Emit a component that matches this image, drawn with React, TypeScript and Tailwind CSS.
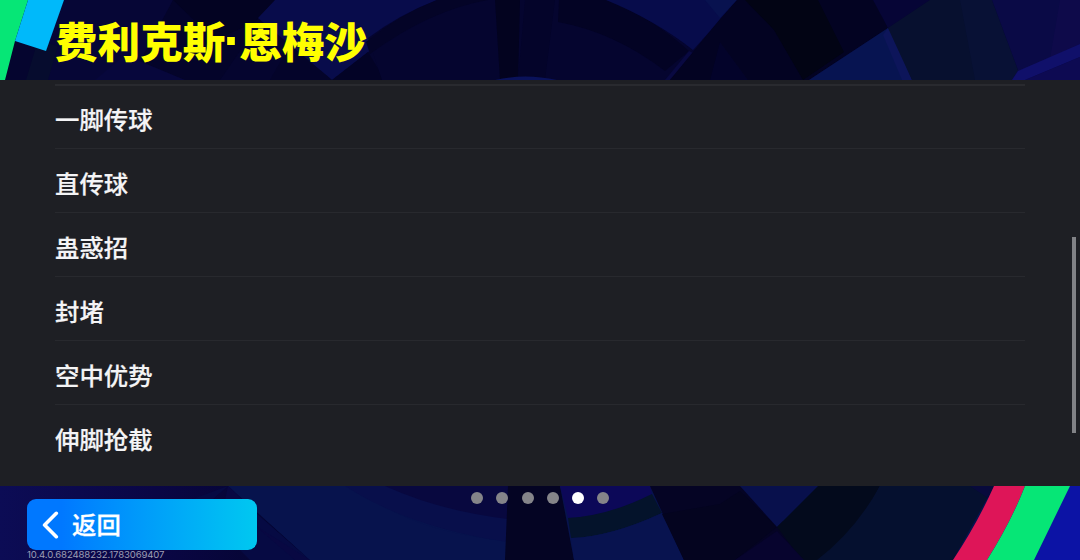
const skills = ["一脚传球", "直传球", "蛊惑招", "封堵", "空中优势", "伸脚抢截"];
const pages = [0, 1, 2, 3, 4, 5];
const activePage = 4;

function HeaderArt() {
  return (
    <svg className="absolute inset-0 h-full w-full" viewBox="0 0 1080 80" preserveAspectRatio="none">
      <rect width="1080" height="80" fill="#05052f" />
      <path d="M64 0H173L150 80H30Z" fill="#060636" />
      <path d="M38 40L58 46L48 80H26Z" fill="#060c2e" />
      <path d="M173 0H275L220 80H130Z" fill="#04042a" />
      <path d="M173 0H275L255 22L215 40Z" fill="#030322" />
      <path d="M95 80L125 55L185 80Z" fill="#07073c" />
      <path d="M275 0H440L368 52L332 80L258 18Z" fill="#080c4b" />
      <path d="M290 45L332 80H270Z" fill="#04042a" />
      <path d="M332 80L368 52L385 80Z" fill="#030326" />
      <path d="M368 38Q400 14 437 0H610Q655 20 693 50L666 80H382Z" fill="#05052f" />
      <path d="M366 42Q398 15 437 0H488Q430 10 370 54Z" fill="#040427" />
      <path d="M495 0H520L518 80H500Z" fill="#03031f" />
      <path d="M525 0H555L545 80H518Z" fill="#04042a" />
      <path d="M559 0H610Q655 20 689 51L665 71Q614 32 558 22Z" fill="#030324" />
      <path d="M495 80Q525 73 557 80Z" fill="#0a125a" />
      <path d="M606 0H737L720 20L693 50Q655 20 606 0Z" fill="#070c4b" />
      <path d="M705 0H737L720 18Z" fill="#08124f" />
      <path d="M689 51L693 53L670 80H665Z" fill="#090941" />
      <path d="M737 0H875L888 28L809 80H670L720 19Z" fill="#030322" />
      <path d="M745 0H818L844 52L803 80L774 30Z" fill="#020414" />
      <path d="M873 0H930L888 28Z" fill="#060536" />
      <path d="M720 42L748 80H710Z" fill="#03032a" />
      <path d="M809 80L888 28L912 80Z" fill="#071451" />
      <path d="M888 28L892 31L912 80H902L883 35Z" fill="#0d155a" />
      <path d="M888 28L930 0H992L1018 70L1012 80H912Z" fill="#07102f" />
      <path d="M960 0H992L1018 70V80H975Z" fill="#081135" />
      <path d="M992 0H1080V80H1012L1018 70Z" fill="#0a0a46" />
      <path d="M1060 0H1080V44L1050 58Z" fill="#0e0a4a" />
      <path d="M1018 71L1080 44V57L1025 80H1012Z" fill="#10106a" />
      <path d="M1025 80L1080 57V80Z" fill="#0d0a52" />
      <path d="M0 0H28L15 41L5 80H0Z" fill="#06e676" />
      <path d="M28 0H64L46 51L15 41Z" fill="#00b9fa" />
    </svg>
  );
}

function FooterArt() {
  return (
    <svg className="absolute inset-0 h-full w-full" viewBox="0 0 1080 74" preserveAspectRatio="none">
      <defs>
        <linearGradient id="footer-left">
          <stop offset="0" stopColor="#0c0c55" />
          <stop offset="0.5" stopColor="#0a0645" />
          <stop offset="1" stopColor="#03052d" />
        </linearGradient>
      </defs>
      <rect width="1080" height="74" fill="#07134d" />
      <path d="M0 0H230L310 74H0Z" fill="url(#footer-left)" />
      <path d="M228 0L213 13H240L310 74H250L190 14Z" fill="#060a43" />
      <path d="M228 0H360Q400 44 506 55V74H310Z" fill="#07134d" />
      <path d="M228 0L256 26V40L310 74H295L225 14Z" fill="#080842" />
      <path d="M345 0H508V56Q410 42 345 0Z" fill="#080f4b" />
      <path d="M385 0H508V33Q440 25 385 0Z" fill="#08083f" />
      <path d="M508 0H560L574 74H505Z" fill="#040423" />
      <path d="M560 0H650L652 8Q608 31 568 32Z" fill="#0c0858" />
      <path d="M568 32Q608 30 652 8L662 27Q610 51 571 52Z" fill="#04132b" />
      <path d="M571 52Q610 51 662 27L684 74H574Z" fill="#08134f" />
      <path d="M650 0H765L802 74H684Z" fill="#050424" />
      <path d="M720 18L740 5L777 41L735 74H684L662 28Z" fill="#04041f" />
      <path d="M740 0H818L777 41Z" fill="#08104c" />
      <path d="M777 41L818 0H880L840 74H802Z" fill="#030a1c" />
      <path d="M777 45L804 74H735Z" fill="#07042e" />
      <path d="M880 0H994L953 74H817Q855 45 880 0Z" fill="#05102f" />
      <path d="M970 0H994L988 12Z" fill="#080a3c" />
      <path d="M1069 0H1080V74H1033Z" fill="#0c13a5" />
      <path d="M994 0H1025Q1011 36 987 74H953Q977 38 994 0Z" fill="#de1558" />
      <path d="M1025 0H1070L1034 74H987Q1011 36 1025 0Z" fill="#06e676" />
    </svg>
  );
}

function SkillRow({ name }: { name: string }) {
  return (
    <li className="flex h-16 shrink-0 items-center border-b border-[#28292e] pt-[5px] first:h-[63px] first:pt-1 last:border-b-0">
      <span className="text-[24.4px] leading-none font-medium text-[#f4f4f6] [-webkit-text-stroke:0.2px_#f4f4f6]">{name}</span>
    </li>
  );
}

function BackButton() {
  return (
    <button className="flex h-[51px] w-[230px] items-center rounded-[9px] bg-linear-to-r from-[#0078ff] from-15% to-[#00c8f0] pl-[15px] text-white">
      <svg className="h-[28px] w-[17px]" viewBox="0 0 17 28" fill="none" stroke="currentColor" strokeWidth="3.6" strokeLinecap="round" strokeLinejoin="round">
        <path d="M14.3 2.3L2.6 14L14.3 25.7" />
      </svg>
      <span className="mb-px ml-[13px] text-[24.4px] leading-none font-medium [-webkit-text-stroke:0.3px_white]">返回</span>
    </button>
  );
}

export default function App() {
  return (
    <div className="flex h-[560px] w-[1080px] flex-col overflow-hidden bg-[#1e1f24] font-['Noto_Sans_CJK_SC',sans-serif]">
      <header className="relative h-20 shrink-0 overflow-hidden">
        <HeaderArt />
        <h1 className="relative flex pt-[19px] pl-[55px] text-[42.6px] leading-[42px] font-black whitespace-nowrap text-[#ffff00]">
          <span>费利克斯</span>
          <span className="flex w-[14px] justify-center font-['Liberation_Sans',sans-serif] text-[54px] font-bold">·</span>
          <span>恩梅沙</span>
        </h1>
      </header>

      <main className="flex h-[406px] shrink-0 pt-1">
        <ul className="-mb-1 ml-[55px] flex w-[970px] flex-col border-t-2 border-[#292a2f]">
          {skills.map((name) => (
            <SkillRow key={name} name={name} />
          ))}
        </ul>
        <div className="mt-[153px] ml-[47px] h-[196px] w-1 bg-[#818286]" />
      </main>

      <footer className="relative h-[74px] shrink-0 overflow-hidden">
        <FooterArt />
        <div className="relative flex">
          <div className="flex w-[471px] shrink-0 flex-col pt-[13px] pl-[27px]">
            <BackButton />
            <span className="font-['Inter',sans-serif] text-[9.6px] leading-[10px] tracking-[-0.13px] text-[#9c9db4]">
              10.4.0.682488232.1783069407
            </span>
          </div>
          <div className="flex gap-[13.3px] pt-[6px]">
            {pages.map((page) => (
              <span
                key={page}
                className={page === activePage ? "size-3 rounded-full bg-white" : "size-3 rounded-full bg-[#858589]"}
              />
            ))}
          </div>
        </div>
      </footer>
    </div>
  );
}
